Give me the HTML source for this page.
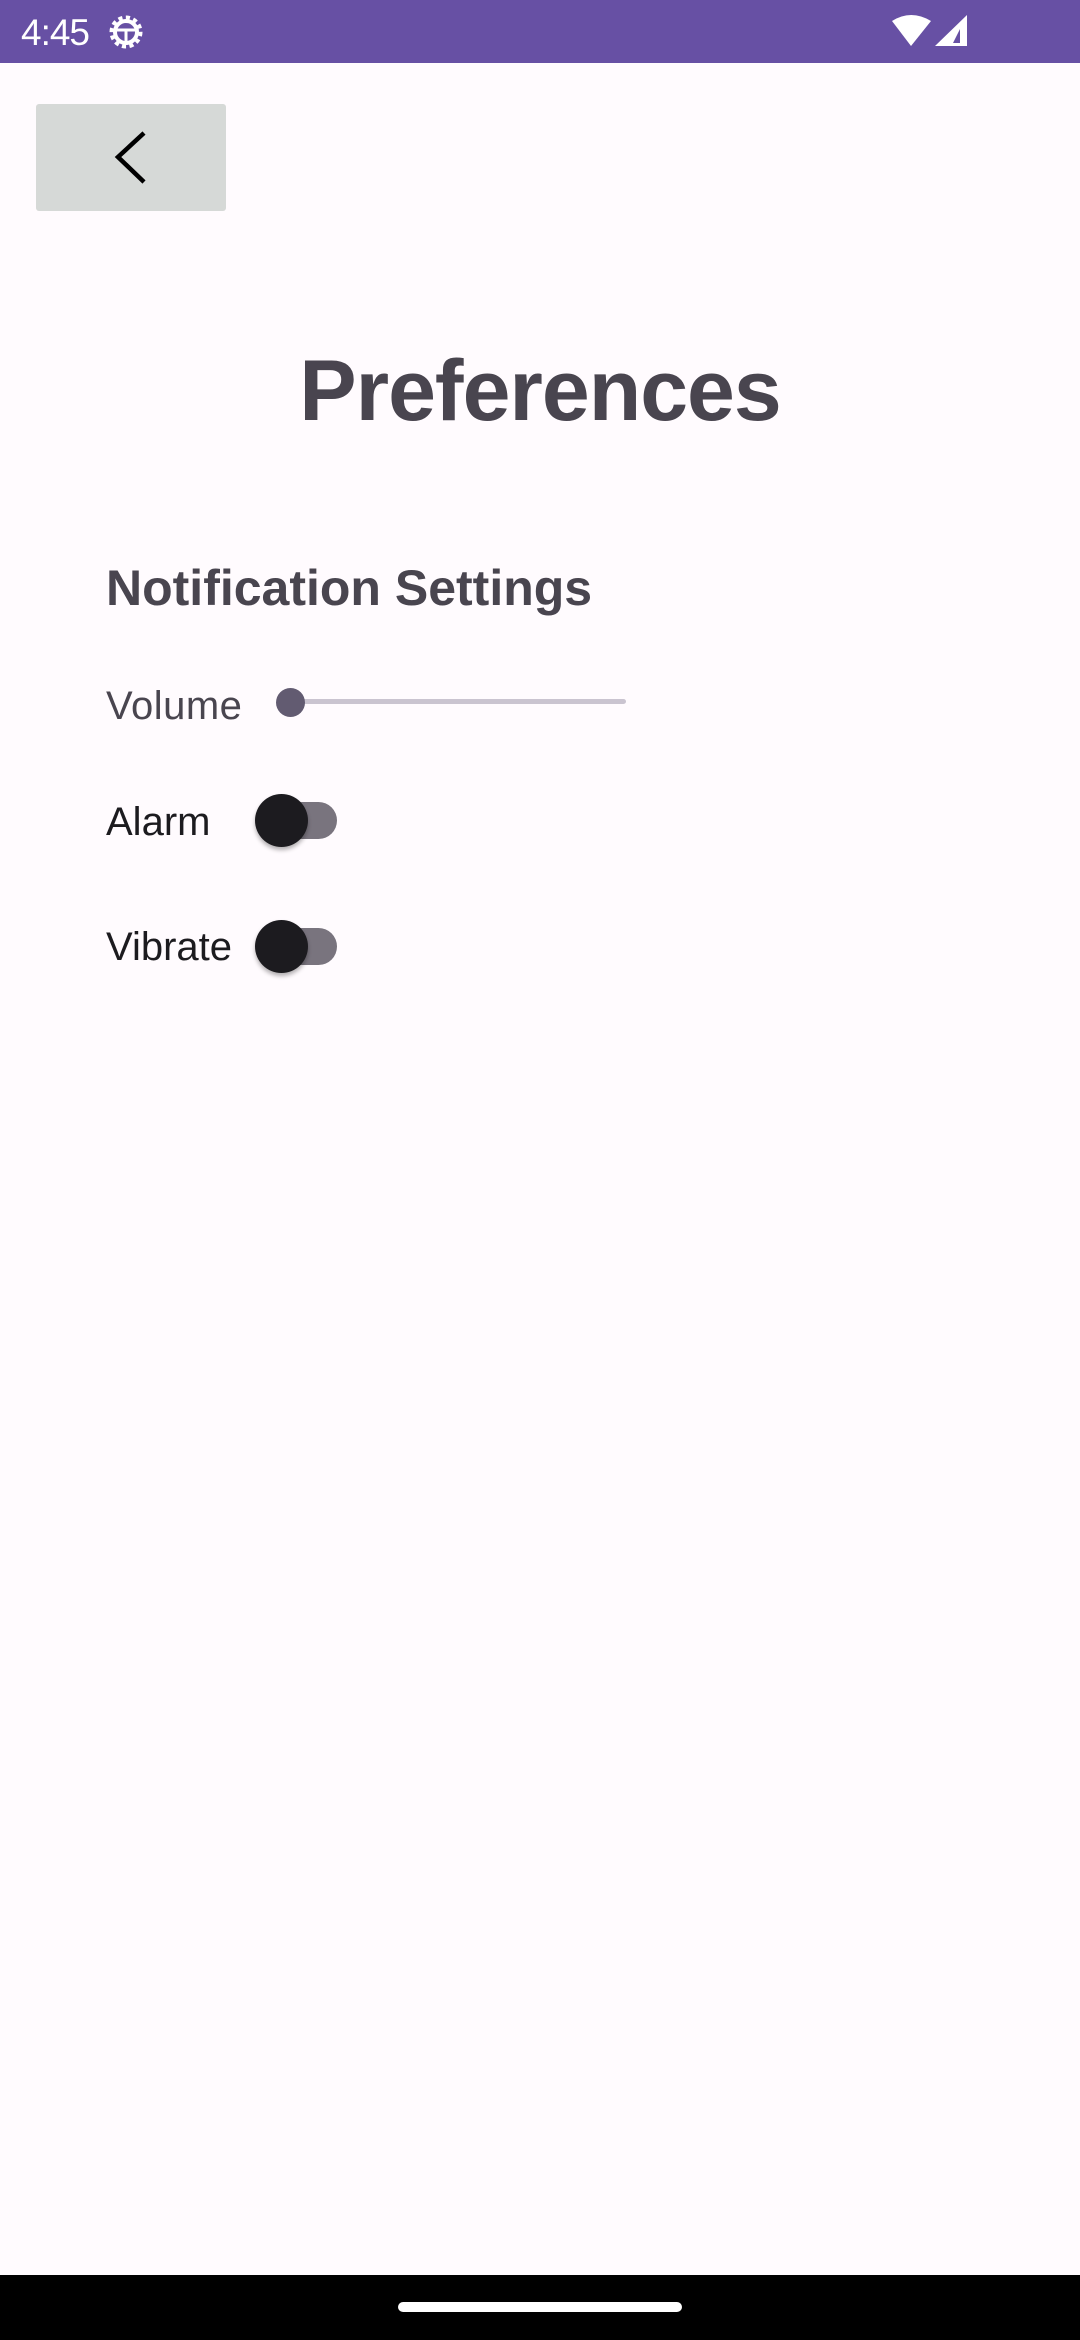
<!DOCTYPE html>
<html><head><meta charset="utf-8"><style>
*{margin:0;padding:0;box-sizing:border-box}
html,body{width:1080px;height:2340px;background:#fffbfe;overflow:hidden;font-family:"Liberation Sans",sans-serif;position:relative}
.abs{position:absolute}
.sb{left:0;top:0;width:1080px;height:63px;background:#6750a4}
.time{left:21px;top:13px;color:#fff;font-size:37px;line-height:40px;letter-spacing:-1px}
.btn{left:36px;top:104px;width:190px;height:107px;background:#d6d9d7;border-radius:3px}
.title{left:0;width:1080px;text-align:center;top:336px;font-size:86px;font-weight:bold;color:#49454f;line-height:110px;letter-spacing:-1px}
.h2{left:106px;top:558px;font-size:50px;font-weight:bold;color:#49454f;line-height:60px;white-space:nowrap}
.lbl{left:106px;font-size:40px;line-height:48px;white-space:nowrap}
.track{height:5px;background:#cac4d0;border-radius:3px}
.thumb{border-radius:50%}
.sw{width:70px;height:37px;border-radius:19px;background:#79747e}
.swt{width:53px;height:53px;border-radius:50%;background:#1c1b1f;box-shadow:0 3px 4px rgba(0,0,0,.3)}
.nav{left:0;top:2275px;width:1080px;height:65px;background:#000}
.pill{left:398px;top:2302px;width:284px;height:10px;border-radius:5px;background:#fff}
</style></head><body>
<div class="abs sb"></div>
<div class="abs time">4:45</div>
<svg class="abs" style="left:106px;top:13px" width="40" height="38" viewBox="0 0 40 38">
<circle cx="20" cy="19" r="14" fill="none" stroke="#fff" stroke-width="5" stroke-dasharray="4 3.3"/>
<circle cx="20" cy="19" r="11" fill="none" stroke="#fff" stroke-width="4"/>
<path d="M9 17H31M20 17V32" stroke="#fff" stroke-width="3"/>
</svg>
<svg class="abs" style="left:890px;top:13px" width="80" height="36" viewBox="0 0 80 36">
<path d="M2 8Q21 -4 41 8L21 33Z" fill="#fff"/>
<path d="M77 2V33H45Z" fill="#fff"/>
<path d="M70 16V30H63Z" fill="#6750a4"/>
</svg>
<div class="abs btn"></div>
<svg class="abs" style="left:100px;top:120px" width="60" height="76" viewBox="0 0 60 76">
<path d="M44 13L18 37L44 62" fill="none" stroke="#000" stroke-width="4.5"/>
</svg>
<div class="abs title">Preferences</div>
<div class="abs h2">Notification Settings</div>
<div class="abs lbl" style="top:682px;color:#49454f;letter-spacing:0.5px">Volume</div>
<div class="abs track" style="left:290px;top:699px;width:336px"></div>
<div class="abs thumb" style="left:276px;top:688px;width:29px;height:29px;background:#625b71"></div>
<div class="abs lbl" style="top:798px;color:#1c1b1f">Alarm</div>
<div class="abs sw" style="left:267px;top:802px"></div>
<div class="abs swt" style="left:255px;top:794px"></div>
<div class="abs lbl" style="top:923px;color:#1c1b1f">Vibrate</div>
<div class="abs sw" style="left:267px;top:928px"></div>
<div class="abs swt" style="left:255px;top:920px"></div>
<div class="abs nav"></div>
<div class="abs pill"></div>
</body></html>
